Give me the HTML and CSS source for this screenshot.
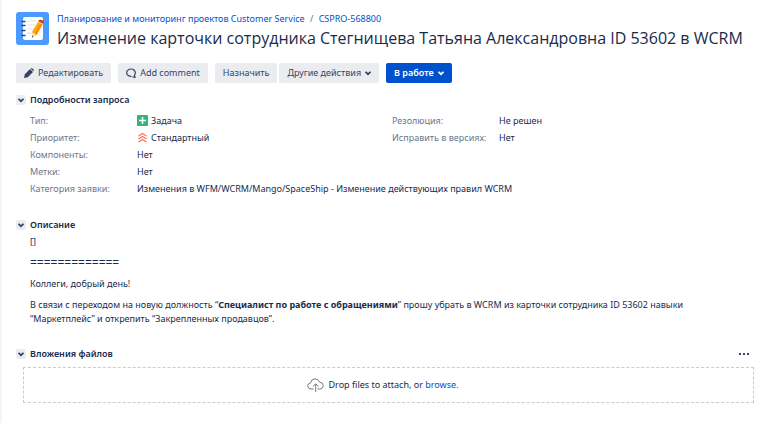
FILE: index.html
```html
<!DOCTYPE html>
<html lang="ru">
<head>
  <meta charset="UTF-8">
  <meta name="viewport" content="width=device-width, initial-scale=1.0">
  <title>CSPRO-568800</title>
  <link rel="stylesheet" href="styles.css">
</head>
<body>

  <main class="issue">
    <header class="issue-header">
      <svg class="avatar" viewBox="0 0 33 33" aria-hidden="true">
        <rect width="33" height="33" rx="3" fill="#4c9aff"/>
        <rect x="7" y="5" width="20" height="23" rx="2" fill="#fff"/>
        <path d="M11 9h9M11 13h8M11 17h7M11 21h5" stroke="#dfe1e6" stroke-width="1"/>
        <path d="M5.500 9.500h4M5.500 13.500h4M5.500 18.500h4M5.500 23.500h4" stroke="#344563" stroke-width="1.300"/>
        <path d="M16 20l6.500-11 4.500 2.500L20.500 23 16 25.500z" fill="#ffab00"/>
        <path d="M18.500 21.500L25 10.500l2 1L20.500 23z" fill="#ff8b00"/>
        <path d="M16 20l4.500 3-4.500 2.500z" fill="#ffe2bd"/>
        <path d="M16 23.500l1.500 1-1.500 1z" fill="#344563"/>
        <path d="M22 9.500l1-1.500q3-1 5 1.500l-1 2.500z" fill="#de350b"/>
        <path d="M22 9.500l5 2.800" stroke="#dfe1e6" stroke-width="1"/>
      </svg>
      <div class="issue-title">
        <nav class="breadcrumbs">
          <a href="#">Планирование и мониторинг проектов Customer Service</a>
          <span>/</span>
          <a href="#">CSPRO-568800</a>
        </nav>
        <h1>Изменение карточки сотрудника Стегнищева Татьяна Александровна ID 53602 в WCRM</h1>
      </div>
    </header>

    <div class="toolbar">
      <button type="button" class="btn">
        <svg width="10" height="10" viewBox="0 0 10 10" aria-hidden="true"><path d="M0 10l.8-3.800L6 1l3 3-5.200 5.200zM6.700.600l.5-.4q.5-.4 1 .1l1.500 1.500q.4.500 0 1l-.4.500z" fill="#344563"/></svg>
        Редактировать
      </button>
      <button type="button" class="btn">
        <svg width="10" height="10" viewBox="0 0 10 10" aria-hidden="true"><path d="M5.500 8.400A4.300 3.700 0 1 1 9.300 5q0 1.500-1 2.400L9.200 9.200H6.500" fill="none" stroke="#344563" stroke-width="1.200"/></svg>
        Add comment
      </button>
      <div class="btn-group">
        <button type="button" class="btn">Назначить</button>
        <button type="button" class="btn">
          Другие действия
          <svg width="6" height="6" viewBox="0 0 6 6" aria-hidden="true"><path d="M.5 1.800L3 4.200l2.500-2.400" fill="none" stroke="#344563" stroke-width="1.700"/></svg>
        </button>
      </div>
      <button type="button" class="btn btn-primary">
        В работе
        <svg width="6" height="6" viewBox="0 0 6 6" aria-hidden="true"><path d="M.5 1.800L3 4.200l2.500-2.400" fill="none" stroke="#fff" stroke-width="1.700"/></svg>
      </button>
    </div>

    <section class="module">
      <div class="module-heading">
        <button type="button" class="toggle" aria-label="Подробности запроса"><svg width="6" height="6" viewBox="0 0 6 6" aria-hidden="true"><path d="M.5 1.800L3 4.200l2.500-2.400" fill="none" stroke="#344563" stroke-width="1.700"/></svg></button>
        <h2>Подробности запроса</h2>
      </div>
      <div class="details">
        <dl>
          <div>
            <dt>Тип:</dt>
            <dd>
              <svg width="11" height="11" viewBox="0 0 11 11" aria-hidden="true"><rect width="11" height="11" rx="1" fill="#36b37e"/><path d="M5.500 2v7M2 5.500h7" stroke="#fff" stroke-width="1.500"/></svg>
              Задача
            </dd>
          </div>
          <div>
            <dt>Приоритет:</dt>
            <dd>
              <svg width="11" height="11" viewBox="0 0 11 11" aria-hidden="true"><path d="M1.500 4l4-2.500 4 2.500M1.500 7l4-2.500 4 2.500M1.500 10l4-2.500 4 2.500" fill="none" stroke="#ff7452" stroke-width="1.300"/></svg>
              Стандартный
            </dd>
          </div>
          <div><dt>Компоненты:</dt><dd>Нет</dd></div>
          <div><dt>Метки:</dt><dd>Нет</dd></div>
          <div><dt>Категория заявки:</dt><dd>Изменения в WFM/WCRM/Mango/SpaceShip - Изменение действующих правил WCRM</dd></div>
        </dl>
        <dl>
          <div><dt>Резолюция:</dt><dd>Не решен</dd></div>
          <div><dt>Исправить в версиях:</dt><dd>Нет</dd></div>
        </dl>
      </div>
    </section>

    <section class="module">
      <div class="module-heading">
        <button type="button" class="toggle" aria-label="Описание"><svg width="6" height="6" viewBox="0 0 6 6" aria-hidden="true"><path d="M.5 1.800L3 4.200l2.500-2.400" fill="none" stroke="#344563" stroke-width="1.700"/></svg></button>
        <h2>Описание</h2>
      </div>
      <div class="description">
        <p>[]</p>
        <p class="divider">=============</p>
        <p>Коллеги, добрый день!</p>
        <p>В связи с переходом на новую должность “<b>Специалист по работе с обращениями</b>” прошу убрать в WCRM из карточки сотрудника ID 53602 навыки “Маркетплейс” и открепить “Закрепленных продавцов”.</p>
      </div>
    </section>

    <section class="module">
      <div class="module-heading">
        <button type="button" class="toggle" aria-label="Вложения файлов"><svg width="6" height="6" viewBox="0 0 6 6" aria-hidden="true"><path d="M.5 1.800L3 4.200l2.500-2.400" fill="none" stroke="#344563" stroke-width="1.700"/></svg></button>
        <h2>Вложения файлов</h2>
        <button type="button" class="more" aria-label="Ещё"><svg width="10" height="2" viewBox="0 0 10 2" aria-hidden="true"><path d="M0 0h2v2H0zM4 0h2v2H4zM8 0h2v2H8z" fill="#344563"/></svg></button>
      </div>
      <div class="dropzone">
        <svg width="17" height="15" viewBox="0 0 17 15" aria-hidden="true"><path d="M6.500 11H4Q.7 10.700.7 7.800.8 5.300 3.500 5 4 1 8 .8q3.500 0 4.500 3.400 3.700.200 3.800 3.300Q16.200 10.700 13 11h-2.500M8.700 14V6M6 8.500L8.700 5.800l2.800 2.700" fill="none" stroke="#7a7a7a"/></svg>
        <span>Drop files to attach, or <a href="#">browse.</a></span>
      </div>
    </section>
  </main>

</body>
</html>
```
FILE: styles.css
```css
* {
  box-sizing: border-box;
}

body {
  margin: 0;
  min-height: 100vh;
  border-left: 2px solid #f4f5f7;
  background: #fff;
  color: #172b4d;
  font-family: "Noto Sans", "Open Sans", sans-serif;
  font-size: 9px;
  line-height: 14px;
}

a {
  color: #0052cc;
  text-decoration: none;
}

h1, h2, p, dl, dd {
  margin: 0;
}

.issue {
  padding: 12px 14px;
}

.issue-header {
  display: flex;
  gap: 8px;
}

.avatar {
  width: 33px;
  height: 33px;
  flex: none;
}

.breadcrumbs span {
  margin: 0 3px;
  color: #6b778c;
}

h1 {
  font-family: "Open Sans", "Noto Sans", sans-serif;
  font-size: 16px;
  font-weight: 500;
  line-height: 24px;
}

.toolbar {
  display: flex;
  gap: 7px;
  margin-top: 13px;
}

.btn {
  display: flex;
  align-items: center;
  justify-content: center;
  gap: 4px;
  height: 20px;
  padding: 0 8px;
  border: 0;
  border-radius: 2px;
  background: #ebecf0;
  color: #344563;
  font: inherit;
  white-space: nowrap;
}

.btn-group {
  display: flex;
  gap: 2px;
}

.btn-primary {
  background: #0052cc;
  color: #fff;
  font-weight: 600;
}

.module {
  margin-top: 10px;
}

.module + .module {
  margin-top: 21px;
}

.module-heading {
  display: flex;
  align-items: center;
  gap: 4px;
}

h2 {
  font-size: 9px;
  font-weight: 600;
  line-height: 14px;
}

.toggle {
  display: flex;
  align-items: center;
  justify-content: center;
  width: 10px;
  height: 10px;
  padding: 0;
  border: 0;
  border-radius: 2px;
  background: #ebecf0;
}

.more {
  display: flex;
  margin-left: auto;
  margin-right: 5px;
  padding: 0;
  border: 0;
  background: none;
}

.details {
  display: grid;
  grid-template-columns: 362px 1fr;
  margin-top: 5px;
  padding-left: 14px;
}

.details dl > div {
  display: grid;
  grid-template-columns: 107px 1fr;
  line-height: 17px;
}

dt {
  color: #6b778c;
}

dd {
  display: flex;
  align-items: center;
  gap: 3px;
  white-space: nowrap;
}

.description {
  padding: 3px 28px 0 14px;
}

.description p + p {
  margin-top: 7px;
}

.divider {
  font-size: 12px;
}

.dropzone {
  display: flex;
  align-items: center;
  justify-content: center;
  gap: 5px;
  height: 36px;
  margin: 6px 0 0 7px;
  padding-right: 12px;
  border: 1px dashed #ccc;
}
```
